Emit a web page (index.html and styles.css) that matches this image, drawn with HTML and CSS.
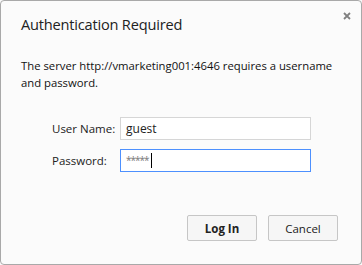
FILE: index.html
```html
<!DOCTYPE html>
<html lang="en">
<head>
    <meta charset="UTF-8">
    <title>Authentication Required</title>
    <link rel="stylesheet" href="styles.css">
</head>
<body>
<div class="dialog">
    <div class="header">
        <h1 class="title">Authentication Required</h1>
        <span class="close">
            <svg width="8" height="8" viewBox="0 0 8 8"><path d="M1 1L7 7M7 1L1 7" stroke="#808080" stroke-width="1.8"/></svg>
        </span>
    </div>
    <p class="message">The server http://vmarketing001:4646 requires a username and password.</p>
    <div class="form">
        <label class="label">User Name:</label>
        <div class="field">guest</div>
        <label class="label">Password:</label>
        <div class="field focused"><span class="stars">*****</span><span class="caret"></span></div>
    </div>
    <div class="buttons">
        <button type="button" class="button default">Log In</button>
        <button type="button" class="button">Cancel</button>
    </div>
</div>
</body>
</html>
```
FILE: styles.css
```css
html {
    background: #fbfbfb;
}
body {
    margin: 0;
    font-family: "Open Sans", "Noto Sans", sans-serif;
    color: #222;
}
.dialog {
    box-sizing: border-box;
    width: 362px;
    height: 265px;
    border: 1px solid #a9a9a9;
    border-radius: 4px;
    background: #fbfbfb;
    display: flex;
    flex-direction: column;
    padding: 0 23px 0 20px;
}
.header {
    display: flex;
    justify-content: space-between;
    align-items: flex-start;
    height: 56px;
}
.title {
    margin: 13px 0 0 0;
    font-size: 14.6px;
    font-weight: normal;
    color: #222;
    letter-spacing: -0.2px;
}
.close {
    margin: 11px -13px 0 0;
    width: 8px;
    height: 8px;
    line-height: 0;
}
.message {
    margin: 0;
    font-size: 11.3px;
    line-height: 17px;
    color: #111;
}
.form {
    display: grid;
    grid-template-columns: 68px 191px;
    grid-row-gap: 9px;
    align-items: center;
    margin: 26px 0 0 31px;
}
.label {
    font-size: 11.5px;
    color: #222;
}
.field {
    box-sizing: border-box;
    height: 23px;
    border: 1px solid #d6d6d6;
    background: #fff;
    font-size: 12px;
    padding: 0 5px;
    line-height: 21px;
    display: flex;
    align-items: center;
}
.field.focused {
    border-color: #4d90fe;
}
.stars {
    color: #777;
    font-size: 10px;
    letter-spacing: -1px;
}
.caret {
    width: 1px;
    height: 15px;
    background: #000;
    margin-left: 2px;
}
.buttons {
    display: flex;
    justify-content: flex-end;
    gap: 11px;
    margin-top: auto;
    margin-bottom: 23px;
}
.button {
    box-sizing: border-box;
    width: 70px;
    height: 26px;
    border: 1px solid #c6c6c6;
    border-radius: 2px;
    background: #f6f6f6;
    font-family: "Open Sans", "Noto Sans", sans-serif;
    font-size: 11.5px;
    color: #222;
    padding: 0;
}
.button.default {
    font-weight: bold;
}
```
